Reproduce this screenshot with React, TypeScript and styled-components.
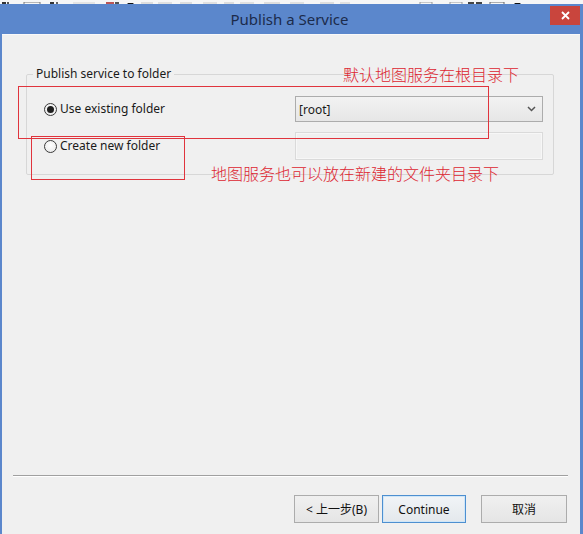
import React from "react";
import styled, { createGlobalStyle } from "styled-components";

const Global = createGlobalStyle`
  html, body { margin: 0; padding: 0; background: #fff; }
  body {
    width: 583px; height: 534px; overflow: hidden;
    font-family: "Noto Sans", "Noto Sans CJK SC", sans-serif;
  }
  #root { width: 583px; height: 534px; }
  * { box-sizing: border-box; }
`;

const Screen = styled.div`
  display: flex;
  flex-direction: column;
  width: 583px;
  height: 534px;
`;

const ToolbarStrip = styled.div`
  flex: none;
  height: 4px;
  background: #f6f6f6;
  overflow: hidden;
  line-height: 0;
`;

const Window = styled.div`
  flex: 1;
  min-height: 0;
  display: flex;
  flex-direction: column;
  background: #5b87cc;
  padding: 0 3px 0 2px;
`;

const TitleBar = styled.div`
  flex: none;
  height: 30px;
  display: grid;
  grid-template-columns: 1fr auto 1fr;
  align-items: start;
`;

const Title = styled.div`
  grid-column: 2;
  align-self: center;
  font-family: "Noto Sans", sans-serif;
  font-size: 15px;
  line-height: 20px;
  color: #1b2b4b;
  margin-top: 0px;
  margin-right: 3px;
`;

const CloseButton = styled.div`
  grid-column: 3;
  justify-self: end;
  margin-top: 2px;
  width: 30px;
  height: 19px;
  background: #c9453d;
  display: flex;
  align-items: center;
  justify-content: center;
`;

const Body = styled.div`
  flex: 1;
  min-height: 0;
  position: relative;
  display: flex;
  flex-direction: column;
  background: #f0f0f0;
  border-top: 1px solid #f9f9f9;
  padding: 31px 0 11px 0;
`;

const Group = styled.fieldset`
  margin: 0 26px 0 24px;
  padding: 0;
  min-width: 0;
  border: 1px solid #d7d7d7;
  border-radius: 2px;
`;

const Legend = styled.legend`
  margin-left: 6px;
  padding: 0 3px;
  font-size: 12px;
  line-height: 16px;
  color: #1a1a1a;
`;

const OptionsGrid = styled.div`
  display: grid;
  grid-template-columns: 1fr 248px;
  row-gap: 10px;
  align-items: center;
  padding: 14px 10px 14px 17px;
`;

const RadioLabel = styled.label`
  display: flex;
  align-items: center;
  gap: 3px;
  font-size: 12px;
  line-height: 16px;
  color: #1a1a1a;
`;

const RadioCircle = styled.span<{ $checked?: boolean }>`
  flex: none;
  width: 13px;
  height: 13px;
  border-radius: 50%;
  border: 1px solid #3a3a3a;
  background: radial-gradient(circle at 50% 40%, #ffffff, #e6e6e6);
  display: flex;
  align-items: center;
  justify-content: center;
  &::after {
    content: "";
    display: ${(p) => (p.$checked ? "block" : "none")};
    width: 7px;
    height: 7px;
    border-radius: 50%;
    background: #1e1e1e;
  }
`;

const Select = styled.div`
  height: 26px;
  border: 1px solid #acacac;
  background: linear-gradient(#f2f2f2, #e6e6e6);
  display: flex;
  align-items: center;
  justify-content: space-between;
  padding: 0 6px 0 3px;
  font-size: 12px;
  color: #1a1a1a;
`;

const TextBox = styled.div`
  height: 28px;
  border: 1px solid #dadada;
  background: #f0f0f0;
  box-shadow: inset 0 0 0 1px #f7f7f7;
`;

const Spacer = styled.div`
  flex: 1;
`;

const Separator = styled.div`
  flex: none;
  height: 1px;
  margin: 0 12px 0 11px;
  background: #a0a0a0;
  box-shadow: 0 1px 0 #ffffff;
`;

const ButtonRow = styled.div`
  flex: none;
  display: flex;
  justify-content: flex-end;
  margin-top: 19px;
  padding-right: 13px;
`;

const Button = styled.div<{ $w: number; $default?: boolean; $gap?: number }>`
  width: ${(p) => p.$w}px;
  height: 28px;
  margin-left: ${(p) => p.$gap ?? 0}px;
  display: flex;
  align-items: center;
  justify-content: center;
  font-size: 12px;
  color: #111;
  border: 1px solid ${(p) => (p.$default ? "#4d8fd0" : "#acacac")};
  background: ${(p) =>
    p.$default ? "linear-gradient(#f1f4f7, #e4e8ec)" : "linear-gradient(#f0f0f0, #e5e5e5)"};
  box-shadow: ${(p) => (p.$default ? "inset 0 0 0 1px #cfe6f8" : "none")};
`;

const Annotation = styled.div<{ $left: number; $top: number; $w: number; $h: number }>`
  position: absolute;
  left: ${(p) => p.$left}px;
  top: ${(p) => p.$top}px;
  width: ${(p) => p.$w}px;
  height: ${(p) => p.$h}px;
  border: 1px solid #e0343d;
  pointer-events: none;
`;

const Note = styled.div<{ $left: number; $top: number }>`
  position: absolute;
  left: ${(p) => p.$left}px;
  top: ${(p) => p.$top}px;
  font-family: "Noto Sans CJK SC", sans-serif;
  font-weight: 300;
  font-size: 16px;
  line-height: 20px;
  color: #dd2630;
  white-space: nowrap;
`;

function ToolbarRemnant() {
  return (
    <svg width="583" height="4" viewBox="0 0 583 4">
      <rect x="2" y="0" width="4" height="3" fill="#333" />
      <rect x="7" y="0" width="2" height="3" fill="#555" />
      <rect x="24" y="0" width="16" height="3" fill="none" stroke="#777" strokeWidth="1" />
      <rect x="50" y="0" width="4" height="3" fill="#333" />
      <rect x="56" y="0" width="2" height="3" fill="#666" />
      <rect x="73" y="0" width="22" height="3" fill="#e4e4e4" />
      <rect x="106" y="0" width="8" height="3" fill="#b55" />
      <rect x="115" y="0" width="4" height="2" fill="#555" />
      <polygon points="127,1 134,1 130.5,4" fill="#111" />
      <rect x="141" y="0" width="12" height="3" fill="#ddd" />
      <rect x="158" y="0" width="14" height="3" fill="#e0e0e0" />
      <rect x="180" y="0" width="12" height="3" fill="#ddd" />
      <rect x="203" y="0" width="14" height="3" fill="#e0e0e0" />
      <rect x="224" y="0" width="10" height="3" fill="#ddd" />
      <rect x="240" y="0" width="14" height="3" fill="#e0e0e0" />
      <rect x="264" y="0" width="16" height="3" fill="#ddd" />
      <rect x="290" y="0" width="14" height="3" fill="#e0e0e0" />
      <rect x="320" y="0" width="14" height="3" fill="#ddd" />
      <rect x="340" y="0" width="10" height="3" fill="#e0e0e0" />
      <rect x="420" y="0" width="12" height="3" fill="none" stroke="#999" />
      <rect x="450" y="0" width="12" height="3" fill="none" stroke="#999" />
      <rect x="468" y="0" width="6" height="3" fill="#444" />
      <rect x="476" y="0" width="6" height="3" fill="#444" />
      <rect x="490" y="0" width="14" height="3" fill="none" stroke="#666" />
      <polygon points="514,1 521,1 517.5,4" fill="#111" />
    </svg>
  );
}

function Chevron() {
  return (
    <svg width="9" height="6" viewBox="0 0 9 6">
      <path d="M1 1 L4.5 4.5 L8 1" fill="none" stroke="#555" strokeWidth="1.5" />
    </svg>
  );
}

function CloseGlyph() {
  return (
    <svg width="9" height="9" viewBox="0 0 9 9">
      <path d="M1 1 L8 8 M8 1 L1 8" stroke="#fff" strokeWidth="1.8" />
    </svg>
  );
}

export default function App() {
  return (
    <>
      <Global />
      <Screen>
        <ToolbarStrip>
          <ToolbarRemnant />
        </ToolbarStrip>
        <Window>
          <TitleBar>
            <Title>Publish a Service</Title>
            <CloseButton>
              <CloseGlyph />
            </CloseButton>
          </TitleBar>
          <Body>
            <Group>
              <Legend>Publish service to folder</Legend>
              <OptionsGrid>
                <RadioLabel>
                  <RadioCircle $checked />
                  Use existing folder
                </RadioLabel>
                <Select>
                  <span>[root]</span>
                  <Chevron />
                </Select>
                <RadioLabel>
                  <RadioCircle />
                  Create new folder
                </RadioLabel>
                <TextBox />
              </OptionsGrid>
            </Group>
            <Spacer />
            <Separator />
            <ButtonRow>
              <Button $w={85}>&lt; 上一步(B)</Button>
              <Button $w={84} $gap={3} $default>
                Continue
              </Button>
              <Button $w={86} $gap={15}>
                取消
              </Button>
            </ButtonRow>

            <Annotation $left={16} $top={51} $w={471} $h={53} />
            <Annotation $left={29} $top={101} $w={154} $h={44} />
            <Note $left={341} $top={29}>默认地图服务在根目录下</Note>
            <Note $left={209} $top={128}>地图服务也可以放在新建的文件夹目录下</Note>
          </Body>
        </Window>
      </Screen>
    </>
  );
}
